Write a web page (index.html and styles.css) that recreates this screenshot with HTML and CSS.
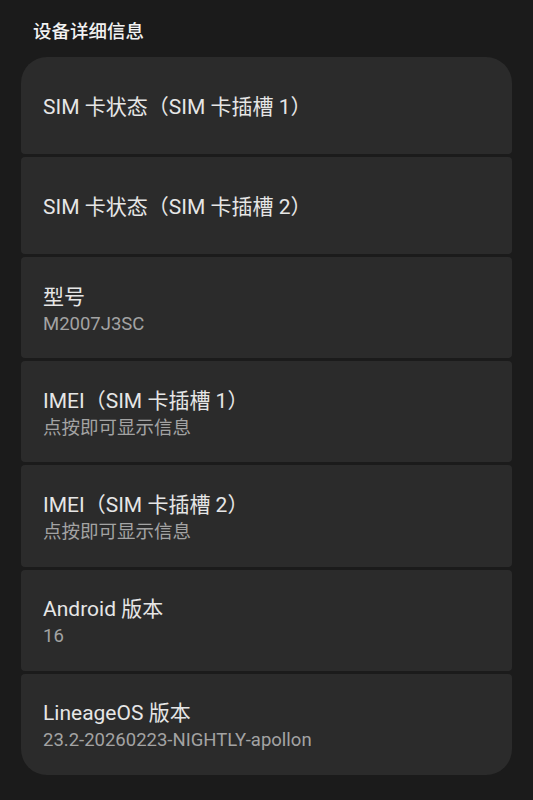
FILE: index.html
```html
<!DOCTYPE html>
<html lang="zh-CN">
<head>
<meta charset="utf-8">
<title>设备详细信息</title>
<link rel="stylesheet" href="styles.css">
</head>
<body>
<div class="screen">
  <h2 class="section-title">设备详细信息</h2>
  <div class="group">
    <div class="item single"><div class="title">SIM 卡状态（SIM 卡插槽 1）</div></div>
    <div class="item single"><div class="title">SIM 卡状态（SIM 卡插槽 2）</div></div>
    <div class="item"><div class="title">型号</div><div class="summary">M2007J3SC</div></div>
    <div class="item"><div class="title">IMEI（SIM 卡插槽 1）</div><div class="summary">点按即可显示信息</div></div>
    <div class="item"><div class="title">IMEI（SIM 卡插槽 2）</div><div class="summary">点按即可显示信息</div></div>
    <div class="item"><div class="title">Android 版本</div><div class="summary">16</div></div>
    <div class="item"><div class="title">LineageOS 版本</div><div class="summary">23.2-20260223-NIGHTLY-apollon</div></div>
  </div>
</div>
</body>
</html>
```
FILE: styles.css
```css
html, body {
  margin: 0;
  padding: 0;
  background: #1b1b1b;
}
body {
  font-family: Roboto, "Noto Sans CJK SC", sans-serif;
  color: #e6e6e6;
}
.screen {
  padding: 20px 21px 24px;
}
.section-title {
  margin: 0 0 13px 12px;
  font-size: 18.5px;
  line-height: 24px;
  font-weight: 500;
  color: #f2f2f2;
}
.group {
  display: flex;
  flex-direction: column;
  gap: 3px;
}
.item {
  background: #2b2b2b;
  border-radius: 4px;
  box-sizing: border-box;
  min-height: 101.2px;
  padding: 25.6px 22px 0;
}
.item.single {
  min-height: 97px;
  padding-top: 36px;
}
.item:first-child {
  border-top-left-radius: 26px;
  border-top-right-radius: 26px;
}
.item:last-child {
  border-bottom-left-radius: 26px;
  border-bottom-right-radius: 26px;
}
.title {
  font-size: 21px;
  line-height: 28px;
  color: #e6e6e6;
}
.summary {
  font-size: 18.5px;
  line-height: 27px;
  color: #a3a3a3;
}
```
